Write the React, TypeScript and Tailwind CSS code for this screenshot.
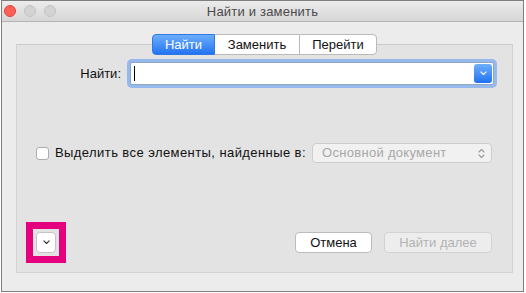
import React from "react";

const font = { fontFamily: '"Liberation Sans", Arial, sans-serif' };

function ChevronDown({ color = "#333", size = 8 }: { color?: string; size?: number }) {
  return (
    <svg width={size} height={size * 0.625} viewBox="0 0 8 5" fill="none">
      <path d="M1 1 L4 4 L7 1" stroke={color} strokeWidth="1.3" strokeLinecap="round" strokeLinejoin="round" />
    </svg>
  );
}

function Stepper() {
  return (
    <svg width="7" height="11" viewBox="0 0 7 11" fill="none">
      <path d="M1 4 L3.5 1.5 L6 4" stroke="#9a9a9a" strokeWidth="1.1" strokeLinecap="round" strokeLinejoin="round" />
      <path d="M1 7 L3.5 9.5 L6 7" stroke="#9a9a9a" strokeWidth="1.1" strokeLinecap="round" strokeLinejoin="round" />
    </svg>
  );
}

export default function App() {
  return (
    <div className="w-[526px] h-[293px] bg-white overflow-hidden" style={font}>
      <div className="ml-[1px] w-[523px] h-[292px] border border-[#7f7f7f] bg-[#ececec] flex flex-col">
        {/* Title bar */}
        <div className="h-[21px] shrink-0 border-b border-[#b4b4b4] bg-gradient-to-b from-[#ececec] to-[#d6d6d6] grid grid-cols-[1fr_auto_1fr] items-center">
          <div className="flex items-center gap-[8px] pl-[2px]">
            <div className="w-[12px] h-[12px] rounded-full bg-[#fc5f57] border border-[#e0443e]" />
            <div className="w-[12px] h-[12px] rounded-full bg-[#d3d3d3] border border-[#c2c2c2]" />
            <div className="w-[12px] h-[12px] rounded-full bg-[#d3d3d3] border border-[#c2c2c2]" />
          </div>
          <div className="text-[13px] text-[#4a4a4a] leading-none tracking-[0.2px]">Найти и заменить</div>
          <div />
        </div>

        {/* Body */}
        <div className="flex flex-col pt-[12px]">
          {/* Tabs */}
          <div className="relative z-10 ml-[150px] flex h-[21px] w-[225px] text-[13px] leading-none">
            <div className="w-[63px] h-full flex items-center justify-center rounded-l-[4px] bg-gradient-to-b from-[#6cadfb] to-[#2173f1] border border-[#2f78e6] text-white">
              Найти
            </div>
            <div className="w-[84px] h-full flex items-center justify-center bg-white border-y border-[#b9b9b9] text-[#111]">
              Заменить
            </div>
            <div className="w-[78px] h-full flex items-center justify-center bg-white border border-[#b9b9b9] rounded-r-[4px] text-[#111]">
              Перейти
            </div>
          </div>

          {/* Panel */}
          <div className="ml-[14px] -mt-[11px] w-[497px] h-[229px] bg-[#e3e3e3] border border-[#d3d3d3] border-t-[#cbcbcb] flex flex-col">
            {/* Row 1 */}
            <div className="mt-[17px] flex items-center h-[23px]">
              <div className="w-[104px] text-right text-[13px] text-[#111]">Найти:</div>
              <div className="ml-[9px] w-[364px] h-[23px] rounded-[2px] border border-[#8fa6c4] bg-white flex items-stretch shadow-[0_0_0_3px_#95b9ec]">
                <div className="flex-1 flex items-center pl-[3px]">
                  <div className="w-[1px] h-[15px] bg-black" />
                </div>
                <div className="w-[18px] my-[1px] mr-[1px] rounded-[3px] bg-gradient-to-b from-[#6eaffb] to-[#1d70f0] flex items-center justify-center">
                  <ChevronDown color="#ffffff" size={7} />
                </div>
              </div>
            </div>

            {/* Row 2 */}
            <div className="mt-[58px] flex items-center h-[20px]">
              <div className="ml-[19px] w-[13px] h-[13px] rounded-[3px] bg-white border border-[#acacac]" />
              <div className="ml-[6px] text-[13px] text-[#111] whitespace-nowrap tracking-[0.42px]">Выделить все элементы, найденные в:</div>
              <div className="ml-auto mr-[20px] w-[180px] h-[20px] rounded-[4px] border border-[#cdcdcd] bg-[#f1f1f1] flex items-center pl-[9px] pr-[6px]">
                <span className="flex-1 text-[13px] text-[#a8a8a8] whitespace-nowrap tracking-[0.3px]">Основной документ</span>
                <Stepper />
              </div>
            </div>

            {/* Row 3 */}
            <div className="mt-[59px] flex items-center">
              <div className="ml-[9px] border-[7px] border-[#e5007e] p-[3px]">
                <div className="w-[20px] h-[21px] rounded-[4px] bg-white border border-[#c4c4c4] flex items-center justify-center">
                  <ChevronDown color="#333" size={7} />
                </div>
              </div>
              <div className="ml-auto flex items-center gap-[12px] mr-[20px]">
                <div className="w-[77px] h-[21px] rounded-[4px] bg-white border border-[#bcbcbc] flex items-center justify-center text-[13px] text-[#111]">
                  Отмена
                </div>
                <div className="w-[108px] h-[21px] rounded-[4px] bg-[#ededed] border border-[#d2d2d2] flex items-center justify-center text-[13px] text-[#b3b3b3]">
                  Найти далее
                </div>
              </div>
            </div>
          </div>
        </div>
      </div>
    </div>
  );
}
